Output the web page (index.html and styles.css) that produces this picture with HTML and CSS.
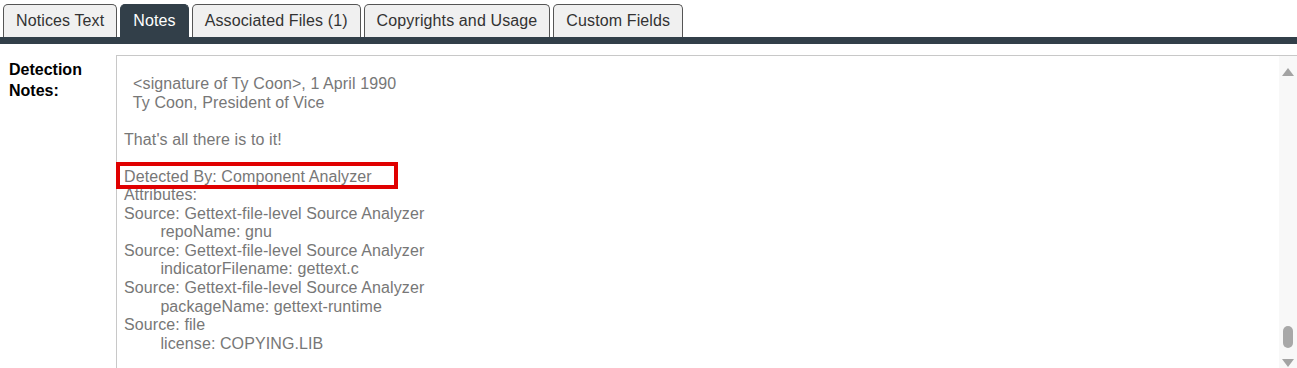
FILE: index.html
```html
<!DOCTYPE html>
<html lang="en">

<head>
    <meta charset="UTF-8">
    <meta name="viewport" content="width=device-width, initial-scale=1.0">
    <title>Component Notes</title>
    <link rel="stylesheet" href="styles.css">
</head>

<body>
    <div class="tabs">
        <button class="tab">Notices Text</button>
        <button class="tab active">Notes</button>
        <button class="tab">Associated Files (1)</button>
        <button class="tab">Copyrights and Usage</button>
        <button class="tab">Custom Fields</button>
    </div>
    <div class="tabbar"></div>

    <div class="row">
        <label class="label">Detection Notes:</label>
        <div class="notes">
            <div class="notes-text">  &lt;signature of Ty Coon&gt;, 1 April 1990
  Ty Coon, President of Vice

That's all there is to it!

Detected By: Component Analyzer
Attributes:
Source: Gettext-file-level Source Analyzer
	repoName: gnu
Source: Gettext-file-level Source Analyzer
	indicatorFilename: gettext.c
Source: Gettext-file-level Source Analyzer
	packageName: gettext-runtime
Source: file
	license: COPYING.LIB
</div>
            <div class="scrollbar">
                <span class="arrow up"></span>
                <span class="thumb"></span>
                <span class="arrow down"></span>
            </div>
            <!-- highlight drawn over the detected-by line -->
            <div class="highlight"></div>
        </div>
    </div>
</body>

</html>
```

FILE: styles.css
```css
body {
    margin: 0;
    font-family: "Liberation Sans", Arial, Helvetica, sans-serif;
    background: #fff;
    overflow: hidden;
}

.tabs {
    display: flex;
    gap: 3px;
    padding: 4px 0 0 3px;
    height: 37px;
    box-sizing: border-box;
}

.tab {
    font-family: inherit;
    font-size: 16px;
    letter-spacing: 0.12px;
    color: #333;
    background-color: #f0f0f0;
    border: 1px solid #555;
    border-bottom: none;
    border-radius: 5px 5px 0 0;
    padding: 0 12px;
    height: 33px;
    cursor: pointer;
}

.tab.active {
    background-color: #323f49;
    border-color: #323f49;
    color: #fff;
}

.tabbar {
    height: 7px;
    background-color: #323f49;
}

.row {
    display: flex;
    padding-top: 11px;
}

.label {
    width: 107px;
    padding: 4px 0 0 9px;
    font-size: 16px;
    font-weight: bold;
    line-height: 21px;
    color: #000;
}

.notes {
    position: relative;
    flex: 1;
    display: flex;
    height: 312px;
    border: 1px solid #c8c8c8;
    border-right: none;
    border-bottom: none;
}

.notes-text {
    flex: 1;
    padding: 19px 0 0 7px;
    font-size: 16px;
    letter-spacing: 0.1px;
    line-height: 18.55px;
    color: #777;
    white-space: pre;
    tab-size: 8;
    overflow: hidden;
}

.scrollbar {
    width: 18px;
    background-color: #f8f8f8;
    position: relative;
}

.arrow {
    position: absolute;
    left: 3px;
    width: 0;
    height: 0;
    border-left: 6px solid transparent;
    border-right: 6px solid transparent;
}

.arrow.up {
    top: 12px;
    border-bottom: 8px solid #a3a3a3;
}

.arrow.down {
    top: 303px;
    border-top: 8px solid #a3a3a3;
}

.thumb {
    position: absolute;
    left: 4px;
    top: 270px;
    width: 10px;
    height: 22px;
    border-radius: 5px;
    background-color: #a8a8a8;
}

.highlight {
    position: absolute;
    left: -1px;
    top: 106px;
    width: 282px;
    height: 27px;
    box-sizing: border-box;
    border: 4px solid #e00000;
}
```
